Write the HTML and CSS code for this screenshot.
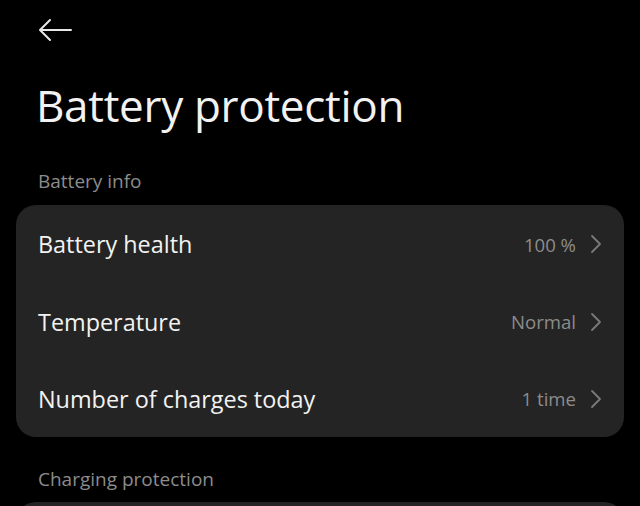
FILE: index.html
```html
<!DOCTYPE html>
<html>
<head>
<meta charset="utf-8">
<link rel="stylesheet" href="styles.css">
</head>
<body>
<div class="page">
  <div class="topbar">
    <svg class="back" width="34" height="24" viewBox="0 0 34 24"><path d="M33 12H2M12 2L2 12l10 10" fill="none" stroke="#e8e8e8" stroke-width="2" stroke-linecap="round" stroke-linejoin="round"/></svg>
  </div>
  <h1 class="title">Battery protection</h1>
  <div class="section-label">Battery info</div>
  <div class="card">
    <div class="row"><span class="label">Battery health</span><span class="value">100 %</span><svg class="chev" width="12" height="20" viewBox="0 0 12 20"><path d="M2 2l8 8-8 8" fill="none" stroke="#7a7a7a" stroke-width="1.8" stroke-linecap="round" stroke-linejoin="round"/></svg></div>
    <div class="row"><span class="label">Temperature</span><span class="value">Normal</span><svg class="chev" width="12" height="20" viewBox="0 0 12 20"><path d="M2 2l8 8-8 8" fill="none" stroke="#7a7a7a" stroke-width="1.8" stroke-linecap="round" stroke-linejoin="round"/></svg></div>
    <div class="row"><span class="label">Number of charges today</span><span class="value">1 time</span><svg class="chev" width="12" height="20" viewBox="0 0 12 20"><path d="M2 2l8 8-8 8" fill="none" stroke="#7a7a7a" stroke-width="1.8" stroke-linecap="round" stroke-linejoin="round"/></svg></div>
  </div>
  <div class="section-label second">Charging protection</div>
  <div class="card short"></div>
</div>
</body>
</html>
```
FILE: styles.css
```css
html, body {
  margin: 0;
  padding: 0;
  background: #000;
  overflow: hidden;
}
body {
  font-family: "Open Sans", "Noto Sans", sans-serif;
  color: #f0f0f0;
  width: 640px;
  height: 506px;
}
.page {
  padding: 0 16px;
}
.topbar {
  height: 62px;
  display: flex;
  align-items: center;
  padding-left: 22px;
}
.back {
  display: block;
  margin-top: -2px;
}
.title {
  margin: 17px 0 0 20px;
  font-weight: 400;
  font-size: 44px;
  line-height: 52px;
  letter-spacing: -0.3px;
  color: #f2f2f2;
}
.section-label {
  margin: 37px 0 0 22px;
  font-size: 19px;
  line-height: 26px;
  color: #8c8c8c;
}
.section-label.second {
  margin-top: 29px;
}
.card {
  margin-top: 11px;
  background: #242424;
  border-radius: 20px;
}
.card.short {
  height: 60px;
  margin-top: 10px;
}
.row {
  height: 77px;
  display: flex;
  align-items: center;
  padding: 0 22px 0 22px;
}
.row:first-child {
  height: 78px;
}
.label {
  flex: 1;
  font-size: 23.4px;
  color: #f2f2f2;
}
.value {
  font-size: 18.6px;
  color: #8c8c8c;
  margin-right: 14px;
}
.chev {
  display: block;
}
```
